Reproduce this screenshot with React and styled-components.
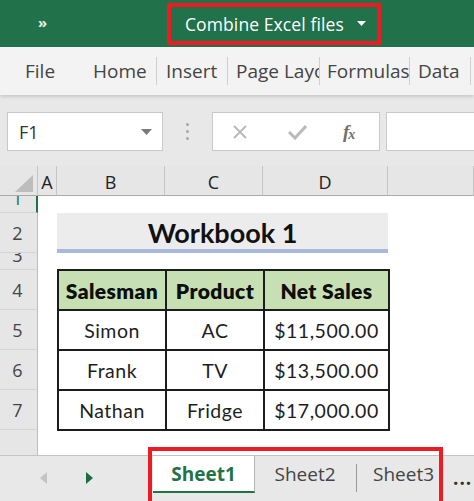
import React from "react";
import styled, { createGlobalStyle } from "styled-components";

const Global = createGlobalStyle`
  html, body { margin: 0; padding: 0; background: #fff; }
  * { box-sizing: border-box; }
`;

const Window = styled.div`
  width: 474px;
  height: 501px;
  overflow: hidden;
  display: flex;
  flex-direction: column;
  position: relative;
  font-family: "Open Sans", "Noto Sans", sans-serif;
  background: #fff;
`;

const TitleBar = styled.div`
  height: 47px;
  flex: none;
  background: #21714a;
  display: flex;
  align-items: center;
  padding-left: 38px;
`;

const Chevron = styled.span`
  color: #e3f3e8;
  font-size: 15px;
  font-weight: 700;
  width: 14px;
  line-height: 1;
  margin-top: -3px;
`;

const TitleBox = styled.div`
  margin-left: 115px;
  width: 214px;
  height: 42px;
  border: 4px solid #ec1c24;
  display: flex;
  align-items: center;
  padding-left: 14px;
  color: #fff;
  font-size: 17.5px;
  letter-spacing: 0.1px;
  white-space: nowrap;
`;

const Caret = styled.svg`
  margin-left: 13px;
  flex: none;
`;

const Ribbon = styled.div`
  height: 48px;
  flex: none;
  background: #f3f3f3;
  display: flex;
  align-items: center;
  padding-left: 25px;
  box-shadow: 0 2px 3px rgba(0, 0, 0, 0.13);
  position: relative;
  z-index: 1;
`;

const RibbonTab = styled.div`
  width: ${(p) => p.$w}px;
  height: 28px;
  padding-left: ${(p) => p.$pad || 0}px;
  line-height: 28px;
  font-size: 19px;
  color: #444;
  white-space: nowrap;
  overflow: hidden;
  border-right: ${(p) => (p.$sep ? "1px solid #cfcfcf" : "none")};
  padding-right: 4px;
`;

const FormulaArea = styled.div`
  height: 71px;
  flex: none;
  background: #e8e8e8;
  display: flex;
  align-items: flex-start;
  padding: 17px 0 0 7px;
`;

const Field = styled.div`
  height: 39px;
  background: #fff;
  border: 1px solid #c9c9c9;
  display: flex;
  align-items: center;
`;

const NameBox = styled(Field)`
  width: 156px;
  justify-content: space-between;
  padding: 0 10px 0 11px;
  font-size: 18px;
  color: #333;
`;

const Grip = styled.div`
  width: 49px;
  height: 39px;
  display: flex;
  flex-direction: column;
  align-items: center;
  justify-content: center;
  gap: 4px;
`;

const Dot = styled.span`
  width: 3px;
  height: 3px;
  border-radius: 50%;
  background: #a8a8a8;
`;

const FxBox = styled(Field)`
  width: 168px;
  padding-left: 19px;
`;

const IconSlot = styled.span`
  width: ${(p) => p.$w}px;
  display: flex;
  align-items: center;
`;

const FxLabel = styled.span`
  font-family: "Liberation Serif", "DejaVu Serif", serif;
  font-style: italic;
  font-weight: 700;
  color: #6f6f6f;
  font-size: 19px;
  letter-spacing: -1px;
  & > sub {
    font-size: 14px;
    vertical-align: -1px;
  }
`;

const FormulaInput = styled(Field)`
  flex: 1;
  margin-left: 6px;
  border-right: none;
`;

const Sheet = styled.div`
  flex: 1;
  display: grid;
  grid-template-columns: 38px 19px 108px 98px 125px 1fr;
  grid-template-rows: 30px 17px 40px 17px 40px 40px 40px 40px 1fr;
  background: #fff;
  font-family: "Lato", "Open Sans", sans-serif;
`;

const Corner = styled.div`
  background: #e6e6e6;
  border-right: 1px solid #c4c4c4;
  border-bottom: 1px solid #a9a9a9;
  display: flex;
  align-items: flex-end;
  justify-content: flex-end;
  padding: 0 4px 3px 0;
`;

const ColHead = styled.div`
  background: #e6e6e6;
  border-right: 1px solid #c4c4c4;
  border-bottom: 1px solid #a9a9a9;
  display: flex;
  align-items: center;
  justify-content: center;
  font-family: "Open Sans", sans-serif;
  font-size: 18px;
  color: #222;
  padding-top: 2px;
`;

const RowHead = styled.div`
  grid-column: 1;
  grid-row: ${(p) => p.$row};
  background: #e6e6e6;
  border-right: ${(p) => (p.$active ? "2px solid #217346" : "1px solid #bdbdbd")};
  border-bottom: ${(p) => (p.$last ? "none" : "1px solid #d3d3d3")};
  display: flex;
  align-items: center;
  justify-content: center;
  overflow: hidden;
  font-family: "Open Sans", sans-serif;
  font-size: 18px;
  color: ${(p) => (p.$active ? "#217346" : "#444")};
  & > span {
    transform: translateY(${(p) => p.$shift || 0}px);
    padding-right: ${(p) => (p.$active ? 1 : 2)}px;
  }
`;

const TitleCell = styled.div`
  grid-column: 3 / 6;
  grid-row: 3;
  background: #ececec;
  border-bottom: 4px solid #a9b8dc;
  display: flex;
  align-items: center;
  justify-content: center;
  font-weight: 700;
  font-size: 27px;
  color: #111;
  padding-top: 2px;
`;

const DataTable = styled.div`
  grid-column: 3 / 6;
  grid-row: 5 / 9;
  margin-top: -1px;
  height: 162px;
  width: 333px;
  display: grid;
  grid-template-columns: 106px 96px 123px;
  grid-template-rows: repeat(4, 1fr);
  gap: 2px;
  padding: 2px;
  background: #1c1c1c;
`;

const Cell = styled.div`
  background: ${(p) => (p.$head ? "#c6e0b4" : "#fff")};
  display: flex;
  align-items: center;
  justify-content: center;
  font-size: ${(p) => (p.$head ? 21 : 19.5)}px;
  font-weight: ${(p) => (p.$head ? 800 : 400)};
  color: ${(p) => (p.$head ? "#0e0e0e" : "#1e1e1e")};
  letter-spacing: ${(p) => (p.$head ? 0.4 : 0.5)}px;
  white-space: nowrap;
`;

const TabBar = styled.div`
  height: 46px;
  flex: none;
  background: #e8e8e8;
  border-top: 1px solid #c4c4c4;
  display: flex;
  align-items: flex-start;
  position: relative;
`;

const Nav = styled.div`
  width: 153px;
  height: 44px;
  display: flex;
  align-items: center;
  padding-left: 40px;
  gap: 39px;
`;

const SheetTab = styled.div`
  width: ${(p) => p.$w}px;
  height: 37px;
  display: flex;
  align-items: center;
  justify-content: center;
  padding-left: ${(p) => p.$pad || 0}px;
  font-size: 19px;
  font-weight: ${(p) => (p.$active ? 700 : 400)};
  color: ${(p) => (p.$active ? "#217346" : "#444")};
  background: ${(p) => (p.$active ? "#fff" : "transparent")};
  border-right: 1px solid ${(p) => (p.$active ? "#b4b4b4" : "transparent")};
  border-bottom: 2px solid ${(p) => (p.$active ? "#217346" : "transparent")};
`;

const TabDivider = styled.span`
  width: 1px;
  height: 28px;
  margin-top: 8px;
  background: #9a9a9a;
`;

const More = styled.div`
  margin-left: 12px;
  height: 44px;
  display: flex;
  align-items: center;
  font-size: 19px;
  font-weight: 700;
  color: #333;
  letter-spacing: 1px;
`;

const Highlight = styled.div`
  position: absolute;
  left: 148px;
  top: -9px;
  width: 295px;
  height: 58px;
  border: 4px solid #ec1c24;
  pointer-events: none;
`;

const rows = [
  ["Simon", "AC", "$11,500.00"],
  ["Frank", "TV", "$13,500.00"],
  ["Nathan", "Fridge", "$17,000.00"],
];

const rowHeads = [
  { n: "1", active: true, shift: -6 },
  { n: "2" },
  { n: "3", shift: -6 },
  { n: "4" },
  { n: "5" },
  { n: "6" },
  { n: "7" },
];

export default function App() {
  return (
    <>
      <Global />
      <Window>
        <TitleBar>
          <Chevron>»</Chevron>
          <TitleBox>
            Combine Excel files
            <Caret width="9" height="5" viewBox="0 0 9 5">
              <polygon points="0,0 9,0 4.5,5" fill="#fff" />
            </Caret>
          </TitleBox>
        </TitleBar>

        <Ribbon>
          <RibbonTab $w={68}>File</RibbonTab>
          <RibbonTab $w={64} $sep>Home</RibbonTab>
          <RibbonTab $w={71} $pad={9} $sep>Insert</RibbonTab>
          <RibbonTab $w={92} $pad={8} $sep>Page Layout</RibbonTab>
          <RibbonTab $w={90} $pad={7} $sep>Formulas</RibbonTab>
          <RibbonTab $w={61} $pad={8} $sep>Data</RibbonTab>
        </Ribbon>

        <FormulaArea>
          <NameBox>
            <span>F1</span>
            <svg width="11" height="6" viewBox="0 0 11 6">
              <polygon points="0,0 11,0 5.5,6" fill="#7a7a7a" />
            </svg>
          </NameBox>
          <Grip>
            <Dot />
            <Dot />
            <Dot />
          </Grip>
          <FxBox>
            <IconSlot $w={56}>
              <svg width="16" height="16" viewBox="0 0 16 16">
                <path d="M2 2 L14 14 M14 2 L2 14" stroke="#bababa" strokeWidth="2" />
              </svg>
            </IconSlot>
            <IconSlot $w={55}>
              <svg width="19" height="16" viewBox="0 0 19 16">
                <path d="M1 8 L7 14 L18 2" stroke="#bababa" strokeWidth="3" fill="none" />
              </svg>
            </IconSlot>
            <FxLabel>
              f<sub>x</sub>
            </FxLabel>
          </FxBox>
          <FormulaInput />
        </FormulaArea>

        <Sheet>
          <Corner>
            <svg width="18" height="17" viewBox="0 0 18 17">
              <polygon points="18,0 18,17 0,17" fill="#bdbdbd" />
            </svg>
          </Corner>
          <ColHead>A</ColHead>
          <ColHead>B</ColHead>
          <ColHead>C</ColHead>
          <ColHead>D</ColHead>
          <ColHead />

          {rowHeads.map((r, i) => (
            <RowHead key={r.n} $row={i + 2} $active={r.active} $shift={r.shift}>
              <span>{r.n}</span>
            </RowHead>
          ))}
          <RowHead $row={9} $last />

          <TitleCell>Workbook 1</TitleCell>

          <DataTable>
            <Cell $head>Salesman</Cell>
            <Cell $head>Product</Cell>
            <Cell $head>Net Sales</Cell>
            {rows.map((r) =>
              r.map((v, i) => <Cell key={r[0] + i}>{v}</Cell>)
            )}
          </DataTable>
        </Sheet>

        <TabBar>
          <Nav>
            <svg width="7" height="12" viewBox="0 0 7 12">
              <polygon points="7,0 7,12 0,6" fill="#c4c4c4" />
            </svg>
            <svg width="7" height="12" viewBox="0 0 7 12">
              <polygon points="0,0 0,12 7,6" fill="#1e6b43" />
            </svg>
          </Nav>
          <SheetTab $w={102} $active>
            Sheet1
          </SheetTab>
          <SheetTab $w={101}>Sheet2</SheetTab>
          <TabDivider />
          <SheetTab $w={84} $pad={10}>Sheet3</SheetTab>
          <More>...</More>
          <Highlight />
        </TabBar>
      </Window>
    </>
  );
}
